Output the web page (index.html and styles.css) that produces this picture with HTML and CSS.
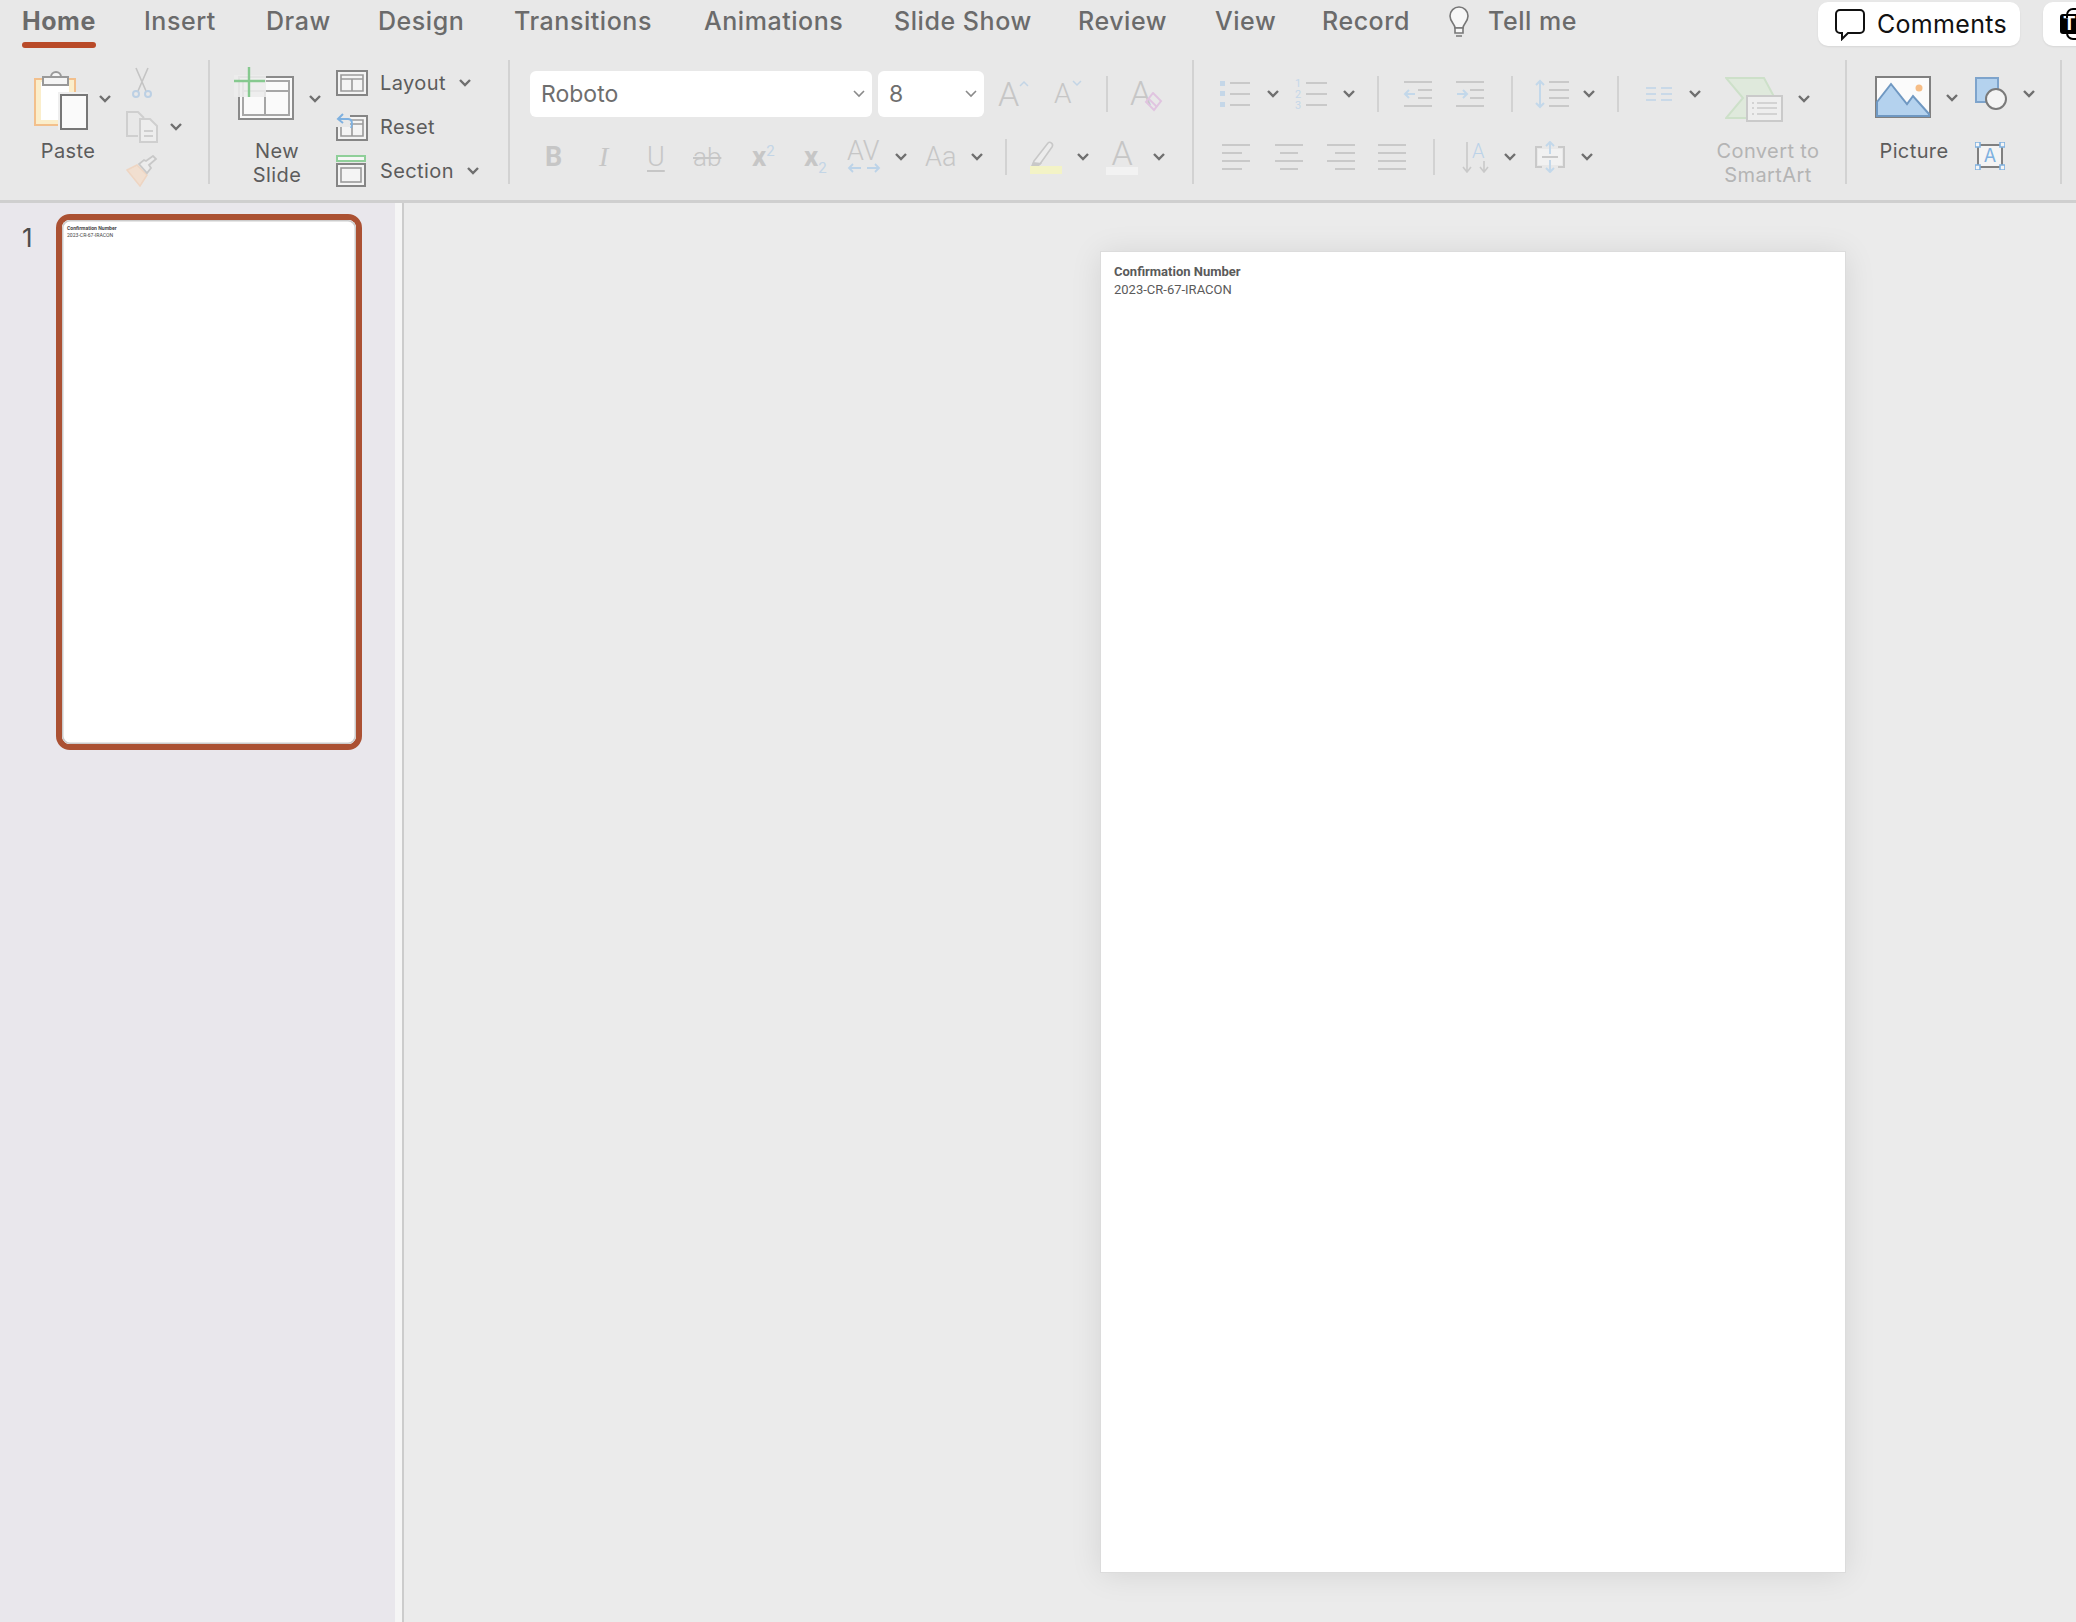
FILE: index.html
```html
<!DOCTYPE html>
<html lang="en">
<head>
    <meta charset="UTF-8">
    <title>Presentation</title>
    <link rel="stylesheet" href="styles.css">
</head>
<body>
    <svg class="defs" width="0" height="0">
        <symbol id="chev" viewBox="0 0 14 10"><path d="M2 2l5 5 5-5" fill="none" stroke="#6f6f6f" stroke-width="2.4"/></symbol>
        <symbol id="chev_thin" viewBox="0 0 14 10"><path d="M2 2l5 5 5-5" fill="none" stroke="#8a8a8a" stroke-width="1.6"/></symbol>
    </svg>

    <div class="ribbon">
        <div class="tabs">
            <div class="tab tab_active">Home</div>
            <div class="tab">Insert</div>
            <div class="tab">Draw</div>
            <div class="tab">Design</div>
            <div class="tab">Transitions</div>
            <div class="tab">Animations</div>
            <div class="tab">Slide Show</div>
            <div class="tab">Review</div>
            <div class="tab">View</div>
            <div class="tab">Record</div>
            <div class="tab bulb">
                <svg width="22" height="34" viewBox="0 0 22 34"><path d="M7 22c0-4-5-6-5-12a9 9 0 0 1 18 0c0 6-5 8-5 12z" fill="#f7f7f7" stroke="#777" stroke-width="1.6"/><path d="M7 22h8v5H7zM8 30h6" fill="#f7f7f7" stroke="#777" stroke-width="1.6"/></svg>
            </div>
            <div class="tab">Tell me</div>
            <div class="pill comments">
                <svg width="34" height="34" viewBox="0 0 34 34"><path d="M7 3h20a4 4 0 0 1 4 4v15a4 4 0 0 1-4 4H15l-6 6v-6H7a4 4 0 0 1-4-4V7a4 4 0 0 1 4-4z" fill="#fff" stroke="#111" stroke-width="2"/></svg>
                <span>Comments</span>
            </div>
            <div class="pill teams">
                <span class="teams_mark">T</span>
            </div>
        </div>

        <div class="tools">
            <!-- clipboard -->
            <div class="group g_clip">
                <div class="big paste_col">
                    <div class="big_top">
                        <svg width="54" height="60" viewBox="0 0 54 60">
                            <rect x="1" y="9" width="40" height="46" fill="#fbeecb" stroke="#f3c08c" stroke-width="2"/>
                            <rect x="7" y="12" width="28" height="38" fill="#fff"/>
                            <path d="M17 7a5 5 0 0 1 10 0" fill="#f5f5f5" stroke="#999" stroke-width="2"/>
                            <rect x="9" y="7" width="25" height="8" fill="#f5f5f5" stroke="#999" stroke-width="2"/>
                            <rect x="24" y="22" width="31" height="38" fill="#efefef"/>
                            <rect x="27" y="25" width="26" height="34" fill="#fafafa" stroke="#777" stroke-width="2"/>
                        </svg>
                        <svg class="chev" width="14" height="10"><use href="#chev"/></svg>
                    </div>
                    <div class="big_label">Paste</div>
                </div>
                <div class="small_col">
                    <div class="small_row">
                        <svg width="20" height="32" viewBox="0 0 20 32">
                            <path d="M6 24L16 1M14 24L4 1" fill="none" stroke="#c4c4c4" stroke-width="1.6"/>
                            <circle cx="4" cy="27" r="3" fill="none" stroke="#bcd0e4" stroke-width="2"/>
                            <circle cx="16" cy="27" r="3" fill="none" stroke="#bcd0e4" stroke-width="2"/>
                        </svg>
                    </div>
                    <div class="small_row copy_row">
                        <svg width="32" height="32" viewBox="0 0 32 32">
                            <path d="M12 25H1V1h11l6 6" fill="none" stroke="#cfcfcf" stroke-width="2"/>
                            <path d="M14 8h10l7 7v16H14z" fill="#ededed" stroke="#cfcfcf" stroke-width="2"/>
                            <path d="M18 20h9M18 25h9" stroke="#cfcfcf" stroke-width="2"/>
                        </svg>
                        <svg class="chev" width="14" height="10"><use href="#chev"/></svg>
                    </div>
                    <div class="small_row">
                        <svg width="32" height="32" viewBox="0 0 32 32">
                            <path d="M1 15l10-5 10 10-7 11z" fill="#f1dfd0" stroke="#eed5c2" stroke-width="1.5"/>
                            <path d="M13 9l8 9 4-5-2-3 7-6-3-3-7 5-2-1z" fill="#ececec" stroke="#c8c8c8" stroke-width="1.8"/>
                        </svg>
                    </div>
                </div>
            </div>

            <!-- slides -->
            <div class="group g_slides">
                <div class="big newslide_col">
                    <div class="big_top">
                        <svg width="60" height="54" viewBox="0 0 60 54">
                            <rect x="5" y="11" width="54" height="42" fill="#fafafa" stroke="#8a8a8a" stroke-width="2"/>
                            <rect x="9" y="15" width="46" height="34" fill="#fafafa" stroke="#a6a6a6" stroke-width="2"/>
                            <path d="M9 25h46M31 25v24" stroke="#a6a6a6" stroke-width="2"/>
                            <rect x="0" y="9" width="32" height="22" fill="#ececec" opacity=".9"/>
                            <path d="M15 1v30M0 15h31" stroke="#86c98f" stroke-width="2.4"/>
                        </svg>
                        <svg class="chev" width="14" height="10"><use href="#chev"/></svg>
                    </div>
                    <div class="big_label">New<br>Slide</div>
                </div>
                <div class="list_col">
                    <div class="list_row">
                        <svg width="32" height="26" viewBox="0 0 32 26">
                            <rect x="1" y="1" width="30" height="24" fill="#f4f4f4" stroke="#858585" stroke-width="2"/>
                            <path d="M5 5h22v16H5zM5 9h22M16 9v12" fill="none" stroke="#9a9a9a" stroke-width="1.6"/>
                        </svg>
                        <span class="list_label">Layout</span>
                        <svg class="chev" width="14" height="10"><use href="#chev"/></svg>
                    </div>
                    <div class="list_row">
                        <svg width="32" height="28" viewBox="0 0 32 28">
                            <rect x="1" y="3" width="30" height="24" fill="#f4f4f4" stroke="#858585" stroke-width="2"/>
                            <path d="M5 7h22v16H5zM5 11h22M16 11v12" fill="none" stroke="#9a9a9a" stroke-width="1.6"/>
                            <path d="M0 0h14v14H0z" fill="#e8e8e8"/>
                            <path d="M7 1L2 6l5 4M2 6h10c4 0 5 4 3 9" fill="none" stroke="#7fb1e0" stroke-width="2"/>
                        </svg>
                        <span class="list_label">Reset</span>
                    </div>
                    <div class="list_row">
                        <svg width="32" height="32" viewBox="0 0 32 32">
                            <rect x="1" y="1" width="28" height="5" fill="#f6f6f6" stroke="#8fcf99" stroke-width="2"/>
                            <rect x="1" y="9" width="28" height="22" fill="#f4f4f4" stroke="#858585" stroke-width="2"/>
                            <rect x="5" y="13" width="20" height="14" fill="#f4f4f4" stroke="#9a9a9a" stroke-width="1.6"/>
                        </svg>
                        <span class="list_label">Section</span>
                        <svg class="chev" width="14" height="10"><use href="#chev"/></svg>
                    </div>
                </div>
            </div>

            <!-- font -->
            <div class="group g_font">
                <div class="rows">
                    <div class="row font_row1">
                        <div class="select font_name">Roboto<svg width="14" height="10"><use href="#chev_thin"/></svg></div>
                        <div class="select font_size">8<svg width="14" height="10"><use href="#chev_thin"/></svg></div>
                        <div class="off glyph big_a">A<svg width="10" height="7" viewBox="0 0 10 7"><path d="M1 6l4-4 4 4" fill="none" stroke="#c3d5e6" stroke-width="1.5"/></svg></div>
                        <div class="off glyph med_a">A<svg width="10" height="7" viewBox="0 0 10 7"><path d="M1 1l4 4 4-4" fill="none" stroke="#c3d5e6" stroke-width="1.5"/></svg></div>
                        <div class="sep"></div>
                        <div class="off glyph clear_a">A<svg width="20" height="20" viewBox="0 0 20 20"><path d="M10 1l8 8-7 9-8-8z" fill="none" stroke="#e0c4e0" stroke-width="2"/><path d="M6 7l8 8" stroke="#e0c4e0" stroke-width="2"/></svg></div>
                    </div>
                    <div class="row row_low font_row2">
                        <div class="off g_b">B</div>
                        <div class="off g_i">I</div>
                        <div class="off g_u">U</div>
                        <div class="off g_s">ab</div>
                        <div class="off g_x">x<sup>2</sup></div>
                        <div class="off g_x">x<sub>2</sub></div>
                        <div class="off g_av">AV
                            <svg width="34" height="12" viewBox="0 0 34 12"><path d="M2 6h12M6 2L2 6l4 4M20 6h12M28 2l4 4-4 4" fill="none" stroke="#bcd3e8" stroke-width="1.8"/></svg>
                        </div>
                        <svg width="14" height="10"><use href="#chev"/></svg>
                        <div class="off g_aa">Aa</div>
                        <svg width="14" height="10"><use href="#chev"/></svg>
                        <div class="sep"></div>
                        <svg width="32" height="34" viewBox="0 0 32 34">
                            <path d="M4 21L18 3c2-2 6 1 4 4L10 24H3z" fill="#ececec" stroke="#c8c8c8" stroke-width="1.6"/>
                            <path d="M3 22l-2 4h8l3-3z" fill="#c8c8c8"/>
                            <rect x="0" y="26" width="32" height="8" fill="#f3f3c6"/>
                        </svg>
                        <svg width="14" height="10"><use href="#chev"/></svg>
                        <div class="off g_col">A</div>
                        <svg width="14" height="10"><use href="#chev"/></svg>
                    </div>
                </div>
            </div>

            <!-- paragraph -->
            <div class="group g_para">
                <div class="rows">
                    <div class="row para_row1">
                        <svg width="30" height="28" viewBox="0 0 30 28">
                            <path d="M0 1h5v5H0zM0 11h5v5H0zM0 22h5v5H0z" fill="#c5d7e8"/>
                            <path d="M10 3h20M10 14h20M10 25h20" stroke="#c9c9c9" stroke-width="2"/>
                        </svg>
                        <svg width="14" height="10"><use href="#chev"/></svg>
                        <div class="num_icon">
                            <div class="num_digits"><span>1</span><span>2</span><span>3</span></div>
                            <svg width="21" height="30" viewBox="0 0 21 30"><path d="M0 4h21M0 15h21M0 26h21" stroke="#c9c9c9" stroke-width="2"/></svg>
                        </div>
                        <svg width="14" height="10"><use href="#chev"/></svg>
                        <div class="sep"></div>
                        <svg width="30" height="28" viewBox="0 0 30 28">
                            <path d="M1 2h28M15 10h14M15 18h14M1 26h28" stroke="#c9c9c9" stroke-width="2"/>
                            <path d="M12 14H2M6 10l-4 4 4 4" fill="none" stroke="#c3d8ea" stroke-width="2"/>
                        </svg>
                        <svg width="30" height="28" viewBox="0 0 30 28">
                            <path d="M1 2h28M15 10h14M15 18h14M1 26h28" stroke="#c9c9c9" stroke-width="2"/>
                            <path d="M2 14h10M8 10l4 4-4 4" fill="none" stroke="#c3d8ea" stroke-width="2"/>
                        </svg>
                        <div class="sep"></div>
                        <svg width="34" height="32" viewBox="0 0 34 32">
                            <path d="M5 3v26M1 7l4-4 4 4M1 25l4 4 4-4" fill="none" stroke="#c3d8ea" stroke-width="2"/>
                            <path d="M14 4h20M14 12h20M14 20h20M14 28h20" stroke="#c9c9c9" stroke-width="2"/>
                        </svg>
                        <svg width="14" height="10"><use href="#chev"/></svg>
                        <div class="sep"></div>
                        <svg width="26" height="16" viewBox="0 0 26 16">
                            <path d="M0 2h10M15 2h11M0 8h10M15 8h11M0 14h10M15 14h11" stroke="#c9d9e8" stroke-width="2"/>
                        </svg>
                        <svg width="14" height="10"><use href="#chev"/></svg>
                    </div>
                    <div class="row row_low para_row2">
                        <svg width="30" height="28" viewBox="0 0 30 28"><path d="M1 2h28M1 10h20M1 18h28M1 26h20" stroke="#c9c9c9" stroke-width="2"/></svg>
                        <svg width="30" height="28" viewBox="0 0 30 28"><path d="M1 2h28M6 10h18M1 18h28M6 26h18" stroke="#c9c9c9" stroke-width="2"/></svg>
                        <svg width="30" height="28" viewBox="0 0 30 28"><path d="M1 2h28M9 10h20M1 18h28M9 26h20" stroke="#c9c9c9" stroke-width="2"/></svg>
                        <svg width="30" height="28" viewBox="0 0 30 28"><path d="M1 2h28M1 10h28M1 18h28M1 26h28" stroke="#c9c9c9" stroke-width="2"/></svg>
                        <div class="sep"></div>
                        <div class="dir_icon">
                            <svg width="30" height="32" viewBox="0 0 30 32"><path d="M6 1v30M2 26l4 5 4-5M23 20v11M19 26l4 5 4-5" fill="none" stroke="#c9c9c9" stroke-width="1.6"/></svg>
                            <span>A</span>
                        </div>
                        <svg width="14" height="10"><use href="#chev"/></svg>
                        <svg width="32" height="32" viewBox="0 0 32 32">
                            <path d="M8 6H2v20h6M24 6h6v20h-6" fill="none" stroke="#c9c9c9" stroke-width="2"/>
                            <rect x="4" y="8" width="24" height="16" fill="#f1f1f1"/>
                            <path d="M8 16h16" stroke="#c9c9c9" stroke-width="2"/>
                            <path d="M16 13V2M12 5l4-4 4 4M16 19v11M12 27l4 4 4-4" fill="none" stroke="#c3d8ea" stroke-width="2"/>
                        </svg>
                        <svg width="14" height="10"><use href="#chev"/></svg>
                    </div>
                </div>
                <div class="big smartart_col">
                    <div class="big_top">
                        <svg width="58" height="46" viewBox="0 0 58 46">
                            <path d="M1 2h38l15 28-12 12H1l17-20z" fill="#dfe9dc" stroke="#cde0c9" stroke-width="2"/>
                            <rect x="22" y="20" width="35" height="25" fill="#eeeeee" stroke="#cacaca" stroke-width="2"/>
                            <path d="M27 27h2M32 27h20M27 32h2M32 32h20M27 38h2M32 38h20" stroke="#cacaca" stroke-width="1.6"/>
                        </svg>
                        <svg class="chev" width="14" height="10"><use href="#chev"/></svg>
                    </div>
                    <div class="big_label off_label">Convert to<br>SmartArt</div>
                </div>
            </div>

            <!-- drawing -->
            <div class="group g_draw">
                <div class="big picture_col">
                    <div class="big_top">
                        <svg width="56" height="42" viewBox="0 0 56 42">
                            <rect x="1" y="1" width="54" height="40" fill="#fbfbfb" stroke="#808080" stroke-width="2"/>
                            <path d="M2 40V26l14-18 16 20 6-8 16 18v2z" fill="#b4d2ee" stroke="#6f98c2" stroke-width="2"/>
                            <circle cx="44" cy="12" r="3.5" fill="#f6bd86"/>
                        </svg>
                        <svg class="chev" width="14" height="10"><use href="#chev"/></svg>
                    </div>
                    <div class="big_label">Picture</div>
                </div>
                <div class="draw_col">
                    <div class="draw_row">
                        <svg width="34" height="34" viewBox="0 0 34 34">
                            <path d="M1 1h22v24H1z" fill="#b4d2ee" stroke="#7ea4cc" stroke-width="2"/>
                            <circle cx="21" cy="22" r="10" fill="#f4f4f4" stroke="#7a7a7a" stroke-width="2"/>
                        </svg>
                        <svg width="14" height="10"><use href="#chev"/></svg>
                    </div>
                    <div class="draw_row">
                        <div class="textbox_icon">
                            <svg width="30" height="28" viewBox="0 0 30 28">
                                <rect x="3" y="3" width="24" height="22" fill="#f4f4f4" stroke="#808080" stroke-width="2"/>
                                <path d="M0 0h5v5H0zM25 0h5v5h-5zM0 23h5v5H0zM25 23h5v5h-5z" fill="#f4f4f4" stroke="#7fb1e0" stroke-width="1.6"/>
                            </svg>
                            <span>A</span>
                        </div>
                    </div>
                </div>
            </div>
        </div>
    </div>

    <div class="workspace">
        <div class="pane">
            <div class="slide_no">1</div>
            <div class="thumb">
                <div class="thumb_page">
                    <b>Confirmation Number</b>
                    <span>2023-CR-67-IRACON</span>
                </div>
            </div>
        </div>
        <div class="splitter"></div>
        <div class="stage">
            <div class="slide">
                <b>Confirmation Number</b>
                <span>2023-CR-67-IRACON</span>
            </div>
        </div>
    </div>
</body>
</html>
```
FILE: styles.css
```css
*{
    padding: 0;
    margin: 0;
    box-sizing: border-box;
}

html, body{
    width: 2076px;
    height: 1622px;
    overflow: hidden;
    font-family: "Inter", "Liberation Sans", sans-serif;
}

.defs{
    position: absolute;
}

svg{
    display: block;
    flex: none;
}

.ribbon{
    height: 203px;
    background-color: #e8e8e8;
    border-bottom: 3px solid #cfcfcf;
}

/* tab strip: columns are the distance between tab starts */
.tabs{
    display: grid;
    grid-template-columns: 122px 122px 112px 136px 190px 190px 184px 137px 107px 126px 40px 330px 225px 60px;
    height: 60px;
    padding-left: 22px;
    width: 2136px;
}

.tab{
    height: 42px;
    line-height: 42px;
    font-size: 25px;
    letter-spacing: 0.55px;
    color: #6b6b6b;
    white-space: nowrap;
    font-weight: 500;
}

.tab_active{
    position: relative;
    font-weight: 700;
    justify-self: start;
}

.tab_active::after{
    content: "";
    position: absolute;
    left: 0;
    right: 0;
    top: 42px;
    height: 6px;
    border-radius: 3px;
    background-color: #b94a28;
}

.bulb{
    padding-top: 6px;
}

.pill{
    display: flex;
    align-items: center;
    height: 44px;
    margin-top: 2px;
    background-color: #fff;
    border-radius: 10px;
    box-shadow: 0 1px 2px rgba(0,0,0,0.08);
}

.comments{
    width: 202px;
    padding-left: 15px;
    gap: 10px;
    font-size: 25px;
    letter-spacing: 0.3px;
    color: #111;
}

.teams{
    padding-left: 17px;
}

/* the mark runs off the right edge of the window */
.teams_mark{
    position: relative;
    width: 30px;
    height: 20px;
    padding-left: 3px;
    line-height: 20px;
    background-color: #000;
    border-radius: 3px;
    color: #fff;
    font-size: 19px;
    font-weight: 700;
}

.teams_mark::before, .teams_mark::after{
    content: "";
    position: absolute;
    left: 6px;
    width: 14px;
    height: 8px;
    border: 2px solid #000;
}

.teams_mark::before{
    top: -6px;
    border-bottom: 0;
    border-radius: 7px 7px 0 0;
}

.teams_mark::after{
    bottom: -6px;
    border-top: 0;
    border-radius: 0 0 7px 7px;
}

.tools{
    display: flex;
}

.group{
    display: flex;
    height: 124px;
    border-right: 2px solid #d2d2d2;
}

.g_clip{
    width: 210px;
    padding-left: 28px;
}

.g_slides{
    width: 300px;
    padding-left: 24px;
}

.g_font{
    width: 684px;
    padding-left: 20px;
}

.g_para{
    width: 653px;
    padding-left: 26px;
}

.g_draw{
    width: 215px;
    padding-left: 24px;
}

/* icon on top, label under it */
.big{
    display: flex;
    flex-direction: column;
    align-items: center;
}

.big_top{
    display: flex;
    align-items: flex-start;
    flex: none;
    height: 79px;
    align-self: flex-start;
}

.big_label{
    font-size: 20px;
    letter-spacing: 0.4px;
    line-height: 24px;
    color: #5c5c5c;
    text-align: center;
    white-space: nowrap;
}

.off_label{
    color: #b4b4b4;
}

.paste_col{
    width: 80px;
}

.paste_col .big_top{
    padding: 10px 0 0 6px;
    gap: 10px;
}

.paste_col .chev{
    margin-top: 24px;
}

.small_col{
    margin-left: 18px;
    padding-top: 1px;
}

.small_row{
    display: flex;
    align-items: center;
    height: 44px;
    gap: 11px;
}

.small_row:first-child{
    padding-left: 6px;
}

.newslide_col{
    width: 86px;
}

.newslide_col .big_top{
    padding-top: 6px;
    gap: 14px;
}

.newslide_col .chev{
    margin-top: 28px;
}

.list_col{
    margin-left: 16px;
    padding-top: 1px;
}

.list_row{
    display: flex;
    align-items: center;
    height: 44px;
}

.list_row > svg:first-child{
    margin-right: 12px;
}

.list_label{
    font-size: 20px;
    letter-spacing: 0.4px;
    color: #5c5c5c;
    margin-right: 12px;
}

.rows{
    padding-top: 3px;
}

.row{
    display: grid;
    align-items: center;
    justify-items: start;
    height: 62px;
}

.row_low{
    margin-top: 1px;
}

.font_row1{
    grid-template-columns: 348px 120px 56px 52px 24px 40px;
}

.font_row2{
    padding-left: 15px;
    grid-template-columns: 54px 48px 42px 63px 52px 43px 47px 31px 45px 35px 25px 46px 30px 46px 20px;
}

.para_row1{
    grid-template-columns: 46px 29px 47px 35px 26px 52px 56px 24px 47px 35px 29px 42px 20px;
}

.para_row2{
    padding-left: 1px;
    grid-template-columns: 53px 52px 51px 56px 28px 42px 31px 46px 20px;
}

.g_para .rows{
    width: 505px;
}

.sep{
    width: 2px;
    height: 36px;
    background-color: #d2d2d2;
}

.select{
    display: flex;
    align-items: center;
    justify-content: space-between;
    height: 46px;
    padding: 0 6px 0 11px;
    background-color: #fff;
    border-radius: 6px;
    font-size: 23px;
    color: #6e6e6e;
}

.font_name{
    width: 342px;
}

.font_size{
    width: 106px;
}

.off{
    color: #c6c6c6;
    font-family: "Roboto", sans-serif;
    line-height: 1;
}

.glyph{
    display: flex;
    position: relative;
    font-weight: 300;
}

.big_a{
    font-size: 34px;
}

.big_a svg{
    margin-top: 3px;
}

.med_a{
    font-size: 28px;
}

.clear_a{
    font-size: 34px;
}

.clear_a svg{
    margin: 16px 0 0 -8px;
}

.g_b{
    font-size: 27px;
    font-weight: 700;
}

.g_i{
    font-family: "Liberation Serif", serif;
    font-size: 28px;
    font-style: italic;
}

.g_u{
    font-size: 27px;
    font-weight: 300;
    text-decoration: underline;
    text-underline-offset: 4px;
}

.g_s{
    font-size: 26px;
    font-weight: 300;
    text-decoration: line-through;
    padding: 0 4px;
}

.g_x{
    font-size: 28px;
    font-weight: 700;
}

.g_x sup, .g_x sub{
    font-size: 15px;
    font-weight: 400;
    color: #c3d5e6;
    line-height: 0;
}

.g_av{
    font-size: 27px;
    font-weight: 300;
    line-height: 22px;
}

.g_aa{
    font-size: 27px;
    font-weight: 300;
}

.g_col{
    width: 32px;
    font-size: 34px;
    font-weight: 300;
    text-align: center;
    line-height: 28px;
    border-bottom: 8px solid #f2f2f2;
}

.num_icon{
    display: flex;
    align-items: center;
    gap: 3px;
}

.num_digits{
    display: flex;
    flex-direction: column;
    width: 8px;
    font-family: "Roboto", sans-serif;
    font-size: 11px;
    line-height: 11px;
    color: #c5d7e8;
}

.dir_icon, .textbox_icon{
    position: relative;
}

.dir_icon span{
    position: absolute;
    left: 11px;
    top: -2px;
    font-size: 20px;
    font-family: "Roboto", sans-serif;
    font-weight: 300;
    color: #bcd3e8;
}

.smartart_col{
    width: 86px;
}

.smartart_col .big_top{
    padding-top: 16px;
    gap: 14px;
}

.smartart_col .chev{
    margin-top: 18px;
}

.picture_col{
    width: 86px;
}

.picture_col .big_top{
    padding: 16px 0 0 4px;
    gap: 14px;
}

.picture_col .chev{
    margin-top: 17px;
}

.draw_col{
    margin-left: 18px;
}

.draw_row{
    display: flex;
    align-items: center;
    height: 62px;
    gap: 13px;
    padding-top: 6px;
}

.textbox_icon span{
    position: absolute;
    left: 0;
    right: 0;
    top: 2px;
    line-height: 24px;
    text-align: center;
    font-size: 18px;
    color: #7fb1e0;
}

.workspace{
    display: flex;
    height: 1419px;
}

.pane{
    display: flex;
    width: 395px;
    padding: 11px 0 0 22px;
    background-color: #e9e7ec;
}

.slide_no{
    width: 34px;
    padding-top: 9px;
    font-size: 26px;
    line-height: 30px;
    color: #4c4c4c;
}

.thumb{
    width: 306px;
    height: 536px;
    border: 6px solid #ab5133;
    border-radius: 14px;
}

.thumb_page{
    height: 100%;
    padding: 5px 0 0 5px;
    background-color: #fff;
    border-radius: 8px;
    box-shadow: inset 0 0 0 1.5px #cccccc;
    font-family: "Roboto", sans-serif;
    font-size: 5.1px;
    line-height: 7px;
    color: #444;
}

.thumb_page b, .thumb_page span, .slide b, .slide span{
    display: block;
}

.splitter{
    width: 9px;
    background-color: #f5f5f5;
    border-right: 2px solid #cccccc;
}

.stage{
    flex: 1;
    padding: 49px 0 0 697px;
    background-color: #ebebeb;
}

.slide{
    width: 744px;
    height: 1320px;
    padding: 11px 0 0 13px;
    background-color: #fff;
    box-shadow: 0 0 0 1px #dcdcdc, 0 2px 30px rgba(0,0,0,0.1);
    font-family: "Roboto", sans-serif;
    font-size: 13px;
    line-height: 18px;
    color: #5a5a5a;
}
```
